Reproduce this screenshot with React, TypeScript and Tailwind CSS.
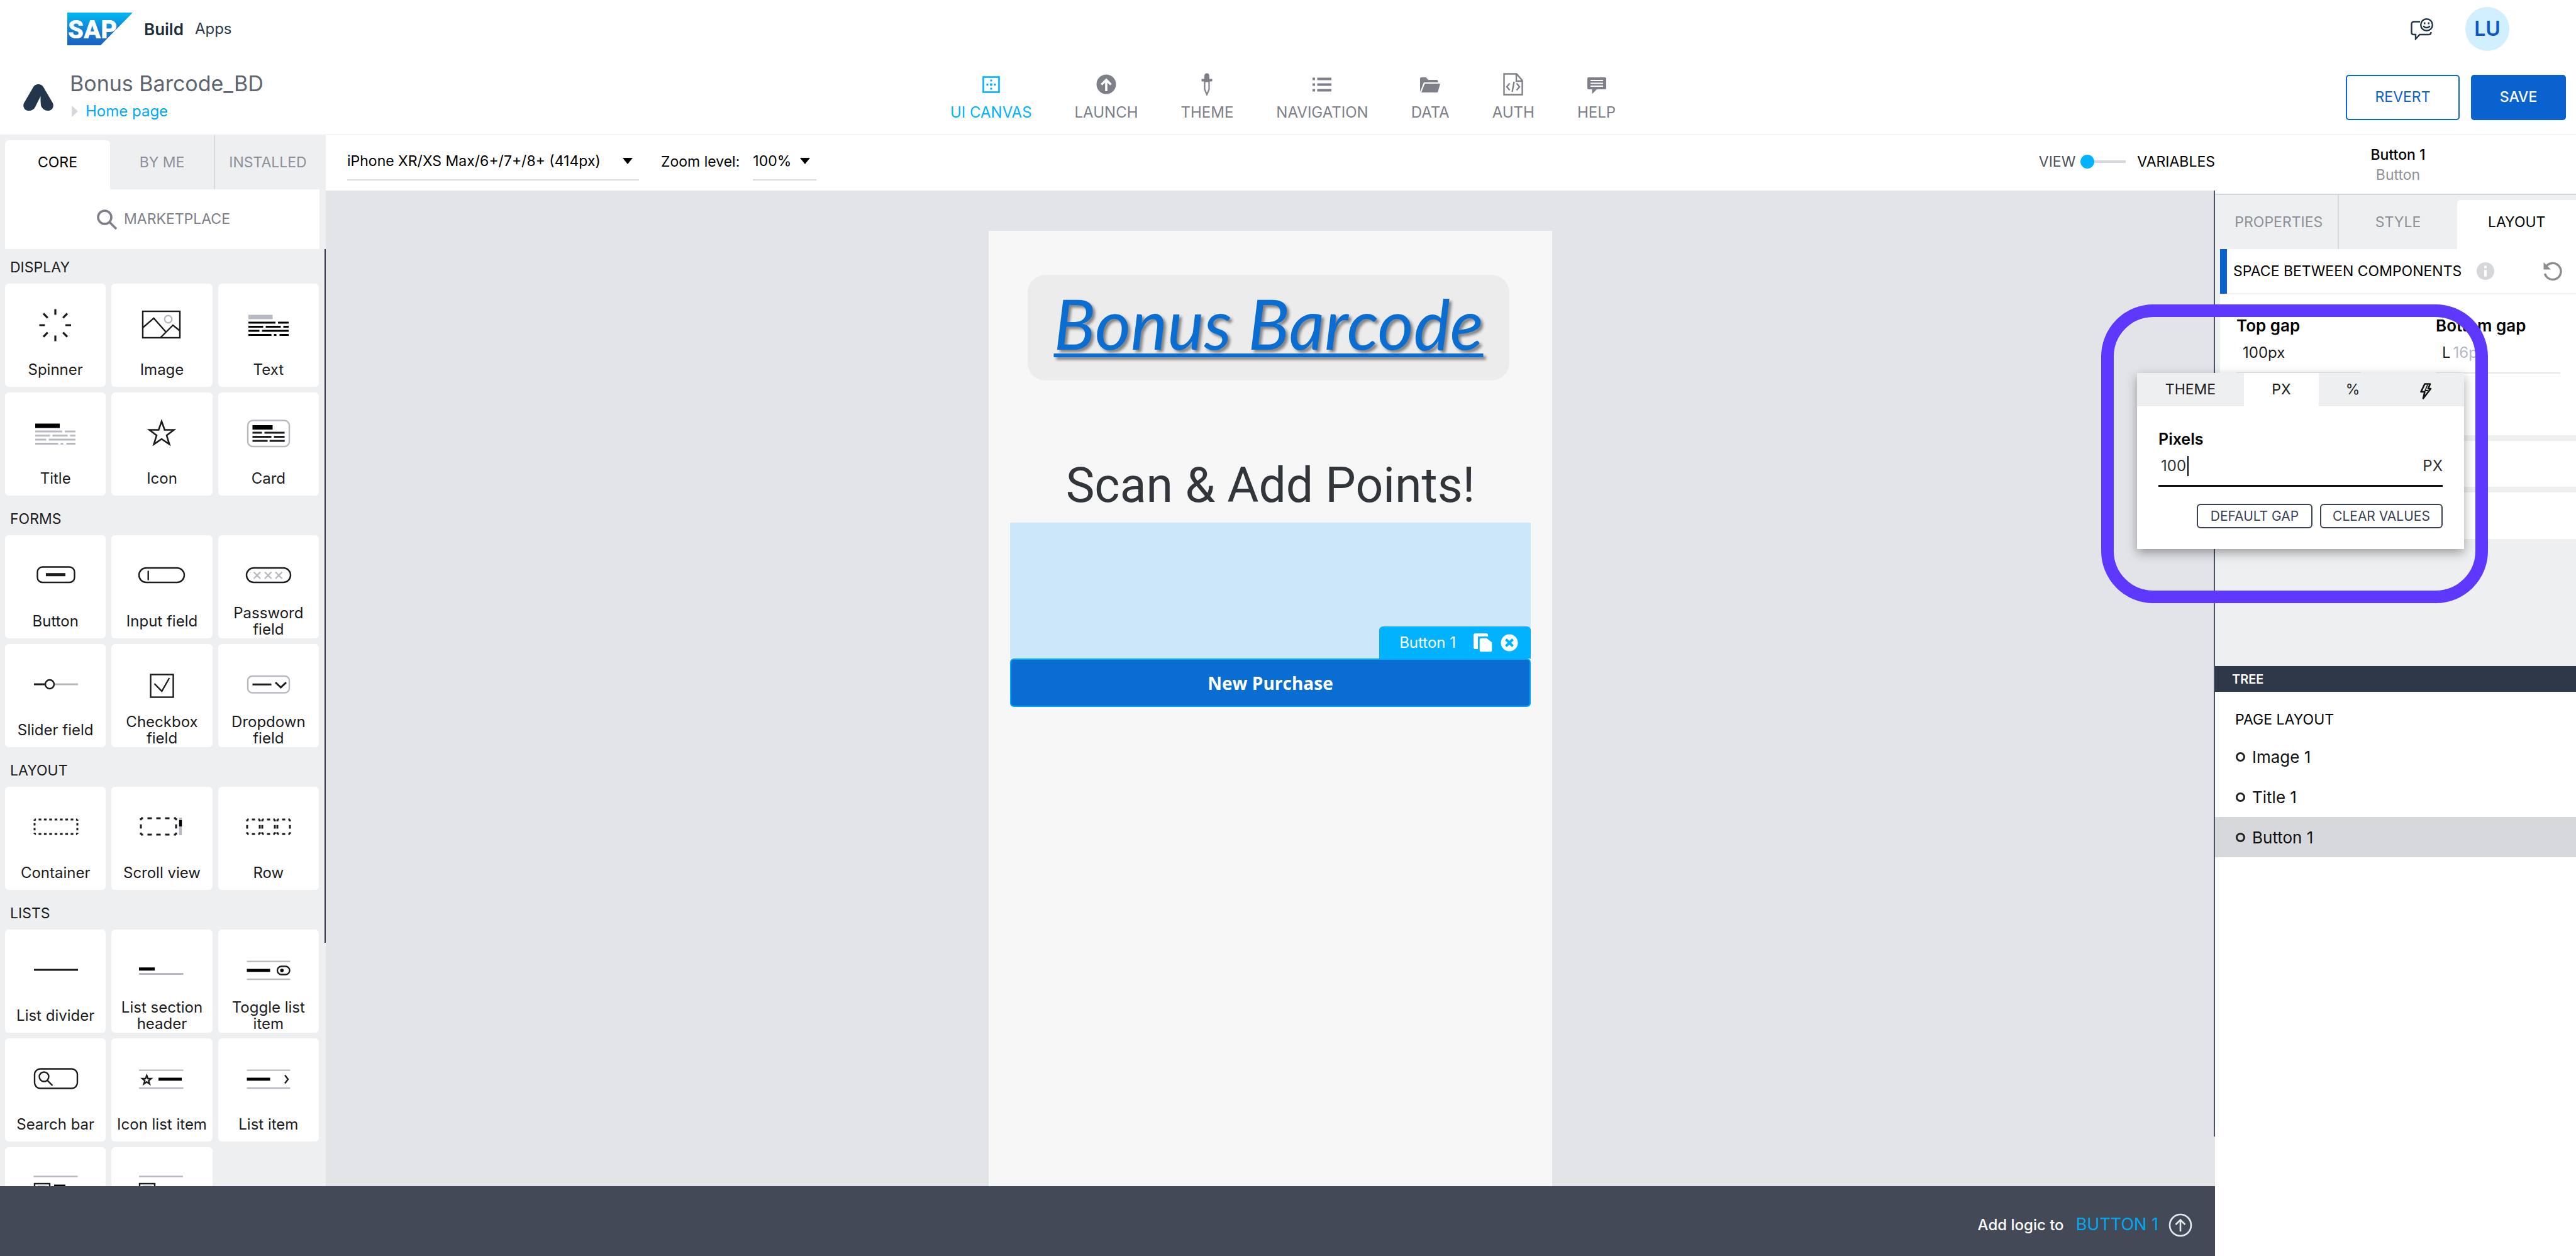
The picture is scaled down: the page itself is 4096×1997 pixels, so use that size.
import type { ReactNode } from "react";

const INK = "#1c1c1e";
const FAINT = "#b7bbc1";

/* ---------- Component icons (120 x 96 artboard) ---------- */

function Art({ children }: { children: ReactNode }) {
  return (
    <svg viewBox="0 0 120 96" className="h-24 w-[120px] shrink-0" fill="none" stroke={INK} strokeWidth={2.4} aria-hidden="true">
      {children}
    </svg>
  );
}

function Dashed({ x, y, w, h, nx, ny }: { x: number; y: number; w: number; h: number; nx: number; ny: number }) {
  const px = w / nx;
  const py = h / ny;
  return (
    <>
      <path d={`M${x} ${y}h${w}M${x} ${y + h}h${w}`} strokeWidth={3} strokeDasharray={`${px / 2} ${px / 2}`} strokeDashoffset={px / 4} />
      <path d={`M${x} ${y}v${h}M${x + w} ${y}v${h}`} strokeWidth={3} strokeDasharray={`${py / 2} ${py / 2}`} strokeDashoffset={py / 4} />
    </>
  );
}

const PARAGRAPH = "M28 44h43M75 44h17M28 50.5h23.5M55.5 50.5h24M83.5 50.5h8.5M28 57h17.500M49.500 57h42.500M28 63.500h36.500M68.500 63.500h4M77.500 63.500h14.500";

const icons: Record<string, ReactNode> = {
  Spinner: (
    <path strokeWidth={3.2} d="M60 22.500v9M60 64.500v9M34.500 48h9M76 48h9M41 29.500l6.800 6.800M79 29.500l-6.800 6.800M41 66.500l6.800-6.800M79 66.500l-6.800-6.800" />
  ),
  Image: (
    <>
      <rect x="30" y="26" width="59" height="42" />
      <path d="M30 52l17.500-15L67 59M58 68l20-20 11 9" />
      <circle cx="70.500" cy="38.500" r="5.700" stroke={FAINT} />
    </>
  ),
  Text: (
    <>
      <rect x="28" y="31.500" width="38.500" height="7" fill={FAINT} stroke="none" />
      <path d={PARAGRAPH} strokeWidth={2.8} stroke="#000" />
    </>
  ),
  Title: (
    <>
      <rect x="28" y="31.500" width="39" height="7" fill="#000" stroke="none" />
      <path d={PARAGRAPH} stroke={FAINT} strokeWidth={2.8} />
    </>
  ),
  Icon: <path d="M60 28l4.800 13.500h14.700L68 50.300l4.300 14L60 56l-12.300 8.300 4.300-14-11.500-8.800h14.700z" strokeWidth={2.6} />,
  Card: (
    <>
      <rect x="27" y="26.500" width="66" height="41.500" rx="8" stroke={FAINT} />
      <rect x="34.500" y="34" width="32" height="7" fill="#000" stroke="none" />
      <path strokeWidth={3.2} d="M34.500 46h15M53.500 46h32M34.500 52.500h30M68.500 52.500h17M34.500 59h24M61.700 59h24" />
    </>
  ),
  Button: (
    <>
      <rect x="31.500" y="32.500" width="59" height="24.500" rx="8" />
      <path d="M45 44.700h31" strokeWidth={5} />
    </>
  ),
  "Input field": (
    <>
      <rect x="24" y="34" width="72" height="23" rx="11.500" />
      <path d="M38.700 38.500v15" />
    </>
  ),
  "Password field": (
    <>
      <rect x="25" y="34" width="70" height="23" rx="11.500" />
      <path stroke={FAINT} d="M36.500 40.500l10.500 10.500M47 40.500l-10.500 10.500M54 40.500l10.500 10.500M64.500 40.500l-10.500 10.500M71 40.500l10.500 10.500M81.500 40.500l-10.500 10.500" />
    </>
  ),
  "Slider field": (
    <>
      <path d="M26 46h17.500" strokeWidth={3} />
      <path d="M58.500 46h37.500" stroke={FAINT} strokeWidth={3} />
      <circle cx="51" cy="46" r="7" />
    </>
  ),
  "Checkbox field": (
    <>
      <rect x="42.500" y="30.500" width="36" height="36" />
      <path d="M48.500 45l11.800 12 12-21" />
    </>
  ),
  "Dropdown field": (
    <>
      <rect x="27" y="33" width="66" height="26.500" rx="7" stroke={FAINT} />
      <path strokeWidth={3} d="M34.500 46.200h30M71 43l8.500 8 8.500-8" />
    </>
  ),
  Container: <Dashed x={27} y={34} w={68} h={23} nx={8} ny={3} />,
  "Scroll view": (
    <>
      <Dashed x={27} y={32} w={56} h={26} nx={4} ny={2} />
      <path d="M90 31v28" stroke={FAINT} strokeWidth={4.4} />
      <path d="M90 35v10" stroke="#000" strokeWidth={4.4} />
    </>
  ),
  Row: (
    <>
      <Dashed x={26} y={34} w={20} h={23} nx={2} ny={2} />
      <Dashed x={50} y={34} w={20} h={23} nx={2} ny={2} />
      <Dashed x={74} y={34} w={20} h={23} nx={2} ny={2} />
    </>
  ),
  "List divider": <path d="M26 46h70" strokeWidth={3} />,
  "List section header": (
    <>
      <path d="M24 44.700h25" strokeWidth={5} stroke="#000" />
      <path d="M24 52.500h70.500" stroke={FAINT} strokeWidth={2.8} />
    </>
  ),
  "Toggle list item": (
    <>
      <path d="M25.500 32.600h69M25.500 61h69" stroke={FAINT} />
      <path d="M25.500 46.800h37" strokeWidth={4.8} stroke="#000" />
      <rect x="74" y="40.500" width="19.500" height="13" rx="6.500" />
      <circle cx="81.300" cy="47" r="2.800" fill="#000" stroke="none" />
    </>
  ),
  "Search bar": (
    <>
      <rect x="27" y="30.500" width="68" height="31" rx="9" />
      <circle cx="42" cy="43" r="7.500" />
      <path d="M47 48.500l8.500 8.500" />
    </>
  ),
  "Icon list item": (
    <>
      <path d="M24 32.600h70.500M24 61h70.500" stroke={FAINT} />
      <path d="M36.300 41l2 5h5l-4 3.300 1.500 5-4.500-3-4.500 3 1.500-5-4-3.300h5z" />
      <path d="M55 46.800h37" strokeWidth={4.8} stroke="#000" />
    </>
  ),
  "List item": (
    <>
      <path d="M25.500 32.600h69M25.500 61h69" stroke={FAINT} />
      <path d="M25.500 46.800h37" strokeWidth={4.8} stroke="#000" />
      <path d="M86 40.500l5 6.500-5 6.500" />
    </>
  ),
  "Image list item": (
    <>
      <path d="M25.500 28.500h70" stroke={FAINT} />
      <rect x="27" y="40" width="24" height="22" />
      <path d="M32 44h14" stroke={FAINT} />
      <path d="M58 44h18" strokeWidth={5} stroke="#000" />
    </>
  ),
  "Large image list item": (
    <>
      <path d="M24 28.500h70" stroke={FAINT} />
      <rect x="25" y="40" width="24" height="22" />
      <path d="M30 44h14" stroke={FAINT} />
    </>
  ),
};

const sections: { title: string; items: string[]; compact?: string[] }[] = [
  { title: "DISPLAY", items: ["Spinner", "Image", "Text", "Title", "Icon", "Card"] },
  { title: "FORMS", items: ["Button", "Input field", "Password field", "Slider field", "Checkbox field", "Dropdown field"] },
  { title: "LAYOUT", items: ["Container", "Scroll view", "Row"] },
  {
    title: "LISTS",
    items: ["List divider", "List section header", "Toggle list item", "Search bar", "Icon list item", "List item"],
    compact: ["Image list item", "Large image list item"],
  },
];

/* ---------- Header ---------- */

const nav: { label: string; icon: ReactNode }[] = [
  {
    label: "UI CANVAS",
    icon: (
      <>
        <rect x="5.500" y="6.500" width="25" height="24" fill="none" stroke="currentColor" strokeWidth="2.600" />
        <path d="M18 10.500v3M18 16.500v4M18 23.500v3M10.500 18.500h3M16 18.500h4M22.500 18.500h3" stroke="currentColor" strokeWidth="3" fill="none" />
      </>
    ),
  },
  {
    label: "LAUNCH",
    icon: (
      <>
        <circle cx="18" cy="18" r="15.500" />
        <path d="M18 29V12M10.500 18.500L18 11l7.500 7.500" stroke="#fff" strokeWidth="3.600" fill="none" />
      </>
    ),
  },
  {
    label: "THEME",
    icon: (
      <>
        <path d="M18 0.500c2.600 0 4 2 4 4.500v4.500h4.500v4H9.500v-4H14V5c0-2.500 1.400-4.500 4-4.500z" />
        <path d="M14.500 13.500h7V26L18 34.500 14.500 26z" fill="none" stroke="currentColor" strokeWidth="2.200" />
      </>
    ),
  },
  {
    label: "NAVIGATION",
    icon: (
      <path d="M3 7.500h4v4H3zM10.500 7.500H33v4H10.500zM3 16.500h4v4H3zM10.500 16.500H33v4H10.500zM3 25.500h4v4H3zM10.500 25.500H33v4H10.500z" />
    ),
  },
  {
    label: "DATA",
    icon: (
      <>
        <path d="M2 30V9.500C2 8 2.500 7 4 7h7.500l3.500 4h13.500c1.500 0 2 1 2 2.200V15H8L2 30z" />
        <path d="M9.500 17H34l-3.500 12.500c-.3 1-1 1.500-2 1.500H4z" />
      </>
    ),
  },
  {
    label: "AUTH",
    icon: (
      <g fill="none" stroke="currentColor" strokeWidth="2.400">
        <path d="M3.500 1.500h20l9 10.500v22.500h-29zM23 1.500V13h9.500" />
        <path d="M12.500 16.500L8 22l4.500 5.500M23.500 16.500L28 22l-4.500 5.500M19.500 14l-3 16" />
      </g>
    ),
  },
  {
    label: "HELP",
    icon: (
      <>
        <path d="M5 7h26c1.300 0 2 .8 2 2v15c0 1.300-.8 2-2 2H18l-7.500 7.500V26H5c-1.300 0-2-.8-2-2V9c0-1.200.7-2 2-2z" />
        <path d="M8 12h20M8 16.500h20M8 21h20" stroke="#fff" strokeWidth="1.800" />
      </>
    ),
  },
];

function Header() {
  return (
    <header className="shrink-0 border-b-2 border-[#f6f6f8] bg-white">
      <div className="flex h-[92px] items-center pr-[106px] pl-[107px]">
        <svg viewBox="0 0 104 52" className="h-[52px] w-[104px]" role="img" aria-label="SAP">
          <defs>
            <linearGradient id="sap" x1="0" y1="0" x2="0" y2="1">
              <stop offset="0" stopColor="#00b9f2" />
              <stop offset="0.500" stopColor="#1283d8" />
              <stop offset="1" stopColor="#1d60c0" />
            </linearGradient>
          </defs>
          <path d="M0 0h104L53 52H0z" fill="url(#sap)" />
          <text x="1" y="41" fontFamily="Roboto, sans-serif" fontWeight="900" fontSize="40" fill="#fff">
            SAP
          </text>
        </svg>
        <span className="ml-[18px] text-[26px] font-semibold text-[#1d2d3e]">Build</span>
        <span className="ml-[18px] text-[24px] text-[#2c3a4a]">Apps</span>
        <button type="button" aria-label="Give feedback" className="ml-auto">
          <svg viewBox="0 0 36 36" className="size-9" fill="none" stroke="#223548" strokeWidth="2.400">
            <path d="M15 6.500H5.500C3 6.500 1.500 8 1.500 10v13.500c0 2 1.500 3.500 4 3.500H8v7l6.500-7H29c2.200 0 3.500-1.500 3.500-4" />
            <circle cx="25.500" cy="11.500" r="9.300" />
            <path d="M20.500 13c1.200 4 8.800 4 10 0" />
            <path d="M22.300 7.500v3M28.700 7.500v3" />
          </svg>
        </button>
        <button type="button" className="ml-[51px] size-[70px] rounded-full bg-[#d1efff] text-[32px] font-semibold text-[#0a57d0]">
          LU
        </button>
      </div>
      <div className="flex h-[121px] items-center pt-1 pr-4">
        <div className="flex flex-1 items-center pl-[37px]">
          <svg viewBox="0 0 48 42" className="h-[42px] w-12" aria-hidden="true">
            <path
              d="M24 0c4.500 0 7.500 2.500 9.500 7L47 30c2.500 6-1.500 12-8 12-5 0-9-3-11-8.500L27.500 26V19L19 36c-2 4-5.500 6-10 6-6.500 0-10.500-6-8-12L14.500 7C16.500 2.500 19.500 0 24 0z"
              fill="#22354a"
            />
          </svg>
          <div className="ml-[26px] flex flex-col">
            <h1 className="text-[34px] leading-[44px] text-[#5d6470]">Bonus Barcode_BD</h1>
            <div className="flex items-center gap-3 pl-[3px]">
              <svg viewBox="0 0 10 18" className="h-[18px] w-2.5" aria-hidden="true">
                <path d="M0 0l10 9-10 9z" fill="#d5d8dc" />
              </svg>
              <a href="#home" className="text-[24px] leading-[44px] text-[#00a8ff]">
                Home page
              </a>
            </div>
          </div>
        </div>
        <nav className="flex gap-[68px]">
          {nav.map((n, i) => (
            <a key={n.label} href={"#" + n.label} className={"flex flex-col items-center " + (i === 0 ? "text-[#00b2ff]" : "text-[#7d8089]")}>
              <span className="flex h-12 items-center">
                <svg viewBox="0 0 36 36" className="size-9" fill="currentColor" aria-hidden="true">
                  {n.icon}
                </svg>
              </span>
              <span className="text-[24px] leading-[42px]">{n.label}</span>
            </a>
          ))}
        </nav>
        <div className="flex flex-1 justify-end gap-[18px] pl-[37px]">
          <button type="button" className="h-[72px] w-[181px] rounded-[5px] border-2 border-[#0a66d0] text-[23px] text-[#0a62ce]">
            REVERT
          </button>
          <button type="button" className="h-[72px] w-[151px] rounded-[5px] bg-[#0a62ce] text-[23px] font-medium text-white">
            SAVE
          </button>
        </div>
      </div>
    </header>
  );
}

/* ---------- Left: component library ---------- */

const CARD = "flex h-[164px] flex-col items-center rounded-md bg-white pt-[18px] text-[#1c1c1e]";

function Library() {
  return (
    <aside className="flex w-[518px] shrink-0 flex-col bg-[#eeeff1]">
      <div role="tablist" className="flex h-[86px] pl-2 text-[23px]">
        <button role="tab" aria-selected="true" className="mt-2 w-[167px] rounded-t-md bg-white pb-2 text-black">
          CORE
        </button>
        <button role="tab" aria-selected="false" className="w-[167px] border-r-2 border-[#d9dadd] text-[#8d9098]">
          BY ME
        </button>
        <button role="tab" aria-selected="false" className="flex-1 pr-2 text-[#8d9098]">
          INSTALLED
        </button>
      </div>
      <button
        type="button"
        className="mr-2.5 ml-2 flex h-[95px] shrink-0 items-center justify-center gap-[11px] bg-white pl-1 text-[23px] text-[#7d8089]"
      >
        <svg viewBox="0 0 32 32" className="size-8" fill="none" stroke="currentColor" strokeWidth="3.600" aria-hidden="true">
          <circle cx="12.500" cy="12.500" r="10.500" />
          <path d="M20 20l11 11" />
        </svg>
        MARKETPLACE
      </button>
      <div className="relative min-h-0 flex-1 overflow-hidden pr-[11px] pl-2">
        <div className="absolute top-0 right-0 h-[74%] w-[2px] bg-[#2e3a4c]" />
        {sections.map((s) => (
          <section key={s.title} className="pb-2">
            <h2 className="pt-1 pl-2 text-[23px] leading-[51px] text-[#1c1c1e]">{s.title}</h2>
            <div className="grid grid-cols-3 gap-[9px]">
              {s.items.map((name) => (
                <button key={name} type="button" className={CARD}>
                  <Art>{icons[name]}</Art>
                  <span className="-mt-1 flex h-[54px] shrink-0 items-center px-1 text-center text-[24px] leading-[26px]">{name}</span>
                </button>
              ))}
              {s.compact?.map((name) => (
                <button key={name} type="button" aria-label={name} className={CARD}>
                  <Art>{icons[name]}</Art>
                </button>
              ))}
            </div>
          </section>
        ))}
      </div>
    </aside>
  );
}

/* ---------- Centre: toolbar and canvas ---------- */

function Caret() {
  return (
    <svg viewBox="0 0 16 10" className="pointer-events-none absolute top-1/2 right-2.5 h-2.5 w-4 -translate-y-1/2" aria-hidden="true">
      <path d="M0 0h16L8 10z" fill="#000" />
    </svg>
  );
}

function Toolbar() {
  return (
    <div className="flex h-[88px] shrink-0 items-center bg-white pb-1 pl-[34px] text-[23px] text-black">
      <div className="relative w-[464px] border-b-2 border-[#d9dbdf]">
        <select aria-label="Device" className="h-[58px] w-full appearance-none bg-transparent">
          <option>iPhone XR/XS Max/6+/7+/8+ (414px)</option>
        </select>
        <Caret />
      </div>
      <label htmlFor="zoom" className="ml-[35px]">
        Zoom level:
      </label>
      <div className="relative ml-[21px] w-[101px] border-b-2 border-[#d9dbdf]">
        <select id="zoom" className="h-[58px] w-full appearance-none bg-transparent">
          <option>100%</option>
        </select>
        <Caret />
      </div>
      <label className="ml-auto flex items-center">
        <span className="text-[#4d525c]">VIEW</span>
        <input type="checkbox" className="sr-only" />
        <span className="ml-2 size-[22px] rounded-full bg-[#00b2ff]" />
        <span className="h-1 w-[50px] bg-[#d5d7dd]" />
        <span className="ml-[18px]">VARIABLES</span>
      </label>
    </div>
  );
}

function Canvas() {
  return (
    <div className="relative min-h-0 flex-1 overflow-hidden bg-[#e3e4e8] pt-16">
      <div className="absolute top-0 right-0 h-[95%] w-[2px] bg-[#4a5160]" />
      <div className="mx-auto flex h-full w-[896px] flex-col bg-[#f7f7f7] px-[34px] pt-[70px]">
        <div className="mr-[34px] ml-7 flex h-[168px] items-center justify-center rounded-[28px] bg-[#ececec] pb-4">
          <span className="font-[Lato] text-[110px] leading-[120px] whitespace-nowrap text-[#0a6dd1] italic underline decoration-[6px] underline-offset-[6px] [text-shadow:4px_4px_4px_rgba(0,0,0,0.45)]">
            Bonus Barcode
          </span>
        </div>
        <h2 className="mt-[114px] mb-[5px] text-center font-[Roboto] text-[77px] leading-[107px] text-[#32363b]">Scan &amp; Add Points!</h2>
        <div className="flex h-[216px] items-end justify-end bg-[#cbe7f9]">
          <div className="flex h-[51px] items-center rounded-t-md bg-[#00b2ff] pr-5 pl-[32px] text-[24px] text-white">
            Button 1
            <button type="button" aria-label="Duplicate" className="ml-[27px]">
              <svg viewBox="0 0 32 32" className="size-8" aria-hidden="true">
                <path d="M4 1h17c2 0 3 1 3 3v2H8v20H4c-2 0-3-1-3-3V4c0-2 1-3 3-3z" fill="#fff" />
                <path d="M13 8h9l9 7v13c0 2-1 3-3 3H13c-2 0-3-1-3-3V11c0-2 1-3 3-3z" fill="#fff" stroke="#00b2ff" strokeWidth="1.500" />
              </svg>
            </button>
            <button type="button" aria-label="Remove" className="ml-3">
              <svg viewBox="0 0 28 28" className="size-7" aria-hidden="true">
                <circle cx="14" cy="14" r="13.500" fill="#fff" />
                <path d="M8.500 8.500l11 11M19.500 8.500l-11 11" stroke="#00b2ff" strokeWidth="4" />
              </svg>
            </button>
          </div>
        </div>
        <button
          type="button"
          className="h-[77px] rounded-md border-2 border-[#00aaff] bg-[#0a6dd1] font-['Open_Sans'] text-[28px] font-bold text-white"
        >
          New Purchase
        </button>
      </div>
    </div>
  );
}

/* ---------- Right: inspector ---------- */

function GapPopup() {
  return (
    <div className="absolute top-[197px] -left-[124px] z-10 w-[520px] bg-white text-black shadow-[0_6px_16px_rgba(0,0,0,0.35)]">
      <div role="tablist" className="flex h-[53px] bg-[#eeeff1] text-[23px] text-[#1c1c1e]">
        <button role="tab" className="w-[170px]">THEME</button>
        <button role="tab" aria-selected="true" className="w-[119px] bg-white">PX</button>
        <button role="tab" className="w-[108px]">%</button>
        <button role="tab" aria-label="Formula" className="flex flex-1 items-center justify-center pt-1">
          <svg viewBox="0 0 20 26" className="h-[26px] w-5" fill="none" stroke="#111" strokeWidth="2.600" strokeLinejoin="round" aria-hidden="true">
            <path d="M8.500 1.500H17l-3 7.500h4L6 24.500 8.500 14H2.500z" />
            <path d="M13 3L9 12h5" strokeWidth="1.800" />
          </svg>
        </button>
      </div>
      <div className="px-[34px] pt-[34px] pb-[33px]">
        <label htmlFor="pixels" className="block text-[25px] leading-9 font-semibold">
          Pixels
        </label>
        <div className="flex h-[58px] items-center border-b-[3px] border-[#111] pb-1.5 text-[#333]">
          <input id="pixels" defaultValue="100" className="w-[50px] pl-1 text-[24px] outline-none" />
          <span className="-ml-1 h-8 w-0.5 bg-black" />
          <span className="ml-auto text-[24px]">PX</span>
        </div>
        <div className="mt-[27px] flex justify-end gap-3 text-[21px] text-[#3b4254]">
          <button type="button" className="h-[39px] w-[184px] rounded-md border-2 border-[#3b4254]">
            DEFAULT GAP
          </button>
          <button type="button" className="h-[39px] w-[195px] rounded-md border-2 border-[#3b4254]">
            CLEAR VALUES
          </button>
        </div>
      </div>
    </div>
  );
}

function Inspector() {
  return (
    <aside className="flex w-[574px] shrink-0 flex-col bg-white">
      <div className="flex h-[95px] flex-col items-center justify-center border-b-2 border-[#d5d7da] pl-2 text-[23px] leading-8">
        <span className="font-medium text-black">Button 1</span>
        <span className="text-[#8f9299]">Button</span>
      </div>
      <div role="tablist" className="grid h-[86px] grid-cols-3 bg-[#eeeff1] pl-2 text-[23px] text-[#8d9098]">
        <button role="tab" className="border-r-2 border-[#d9dadd]">PROPERTIES</button>
        <button role="tab">STYLE</button>
        <button role="tab" aria-selected="true" className="mt-2 rounded-tl-md bg-white pb-2 text-black">
          LAYOUT
        </button>
      </div>
      <div className="relative flex h-[663px] shrink-0 flex-col gap-[9px] bg-[#eeeff1] pl-2">
        <section className="bg-white">
          <div className="flex h-[72px] items-center border-b-2 border-[#f1f1f3] pr-[21px]">
            <span className="h-[71px] w-[11px] bg-[#0a62ce]" />
            <h3 className="ml-2.5 text-[23px] text-black">SPACE BETWEEN COMPONENTS</h3>
            <svg viewBox="0 0 28 28" className="ml-6 size-7" aria-hidden="true">
              <circle cx="14" cy="14" r="14" fill="#d5d7da" />
              <path d="M14 5.500v4M14 12v10.500" stroke="#fff" strokeWidth="4" />
            </svg>
            <button type="button" aria-label="Reset" className="ml-auto">
              <svg viewBox="0 0 32 32" className="size-8" fill="none" stroke="#8d8d8d" strokeWidth="3.400" aria-hidden="true">
                <path d="M5 9.500A13 13 0 1 1 3.500 20" />
                <path d="M1.500 2v11.500H13z" fill="#8d8d8d" stroke="none" />
              </svg>
            </button>
          </div>
          <div className="flex h-[224px] gap-[119px] pt-[31px] pl-[26px] text-black">
            <div className="w-[198px]">
              <div className="text-[26px] leading-[38px] font-semibold">Top gap</div>
              <div className="h-[57px] border-b-2 border-[#e6e7ea] pl-2.5 text-[24px] leading-[48px] text-[#1c1c1e]">100px</div>
            </div>
            <div className="w-[198px]">
              <div className="text-[26px] leading-[38px] font-semibold">Bottom gap</div>
              <div className="flex h-[57px] gap-1 border-b-2 border-[#e6e7ea] pl-2.5 text-[24px] leading-[48px] text-[#1c1c1e]">
                L <span className="text-[#b6bac6]">16px</span>
              </div>
            </div>
          </div>
        </section>
        <section className="h-[73px] bg-white" />
        <section className="h-[74px] bg-white" />
        <div className="absolute top-[88px] -left-[181px] h-[475px] w-[615px] rounded-[83px] border-[20px] border-[#5e38ff]" />
        <GapPopup />
      </div>
      <div className="flex h-[41px] shrink-0 items-center bg-[#2f3848] pl-[27px] text-[20px] font-semibold text-white">TREE</div>
      <div className="h-[71px] shrink-0 pl-[32px] text-[23px] leading-[88px] text-black">PAGE LAYOUT</div>
      <ul className="text-[26px] text-[#111]">
        {["Image 1", "Title 1", "Button 1"].map((t) => (
          <li key={t} className={"flex h-16 items-center pl-[33px] " + (t === "Button 1" ? "bg-[#d7d8dc]" : "")}>
            <span className="mr-[11px] size-[15px] rounded-full border-[3px] border-[#222]" />
            {t}
          </li>
        ))}
      </ul>
    </aside>
  );
}

export default function App() {
  return (
    <div className="flex h-screen flex-col overflow-hidden bg-white font-[Inter,sans-serif]">
      <Header />
      <div className="flex min-h-0 flex-1">
        <main className="flex min-w-0 flex-1 flex-col">
          <div className="flex min-h-0 flex-1">
            <Library />
            <div className="flex min-w-0 flex-1 flex-col">
              <Toolbar />
              <Canvas />
            </div>
          </div>
          <footer className="flex h-[111px] shrink-0 items-center justify-end bg-[#434957] pt-3 pr-9">
            <span className="text-[24px] font-medium text-white">Add logic to</span>
            <button type="button" className="ml-[19px] flex items-center gap-4 text-[27px] text-[#00a8f0]">
              BUTTON 1
              <svg viewBox="0 0 38 38" className="size-[38px]" fill="none" stroke="#e8eaee" strokeWidth="2.600" aria-hidden="true">
                <circle cx="19" cy="19" r="17" />
                <path d="M19 29V11M11.500 18L19 10.500l7.500 7.500" />
              </svg>
            </button>
          </footer>
        </main>
        <Inspector />
      </div>
    </div>
  );
}
